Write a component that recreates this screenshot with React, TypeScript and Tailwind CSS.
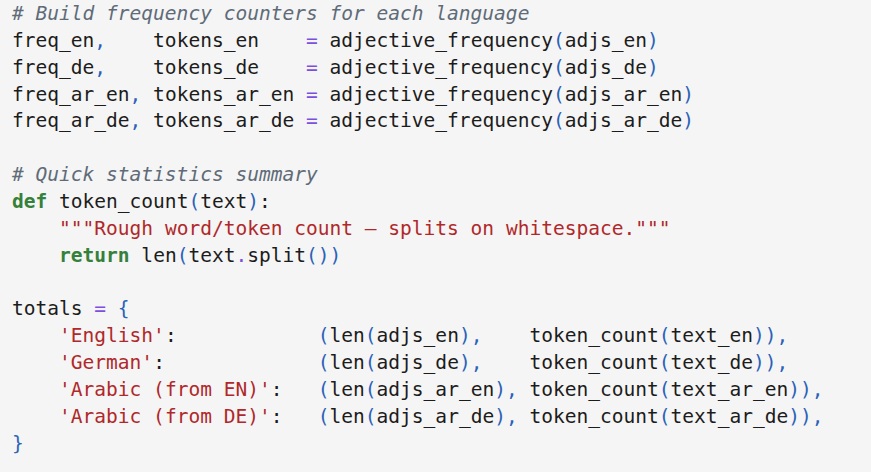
const C = ({ children }: { children: React.ReactNode }) => (
  <span className="italic text-[#5f6b78]">{children}</span>
);
const K = ({ children }: { children: React.ReactNode }) => (
  <span className="font-bold text-[#35803a]">{children}</span>
);
const S = ({ children }: { children: React.ReactNode }) => (
  <span className="text-[#b0282a]">{children}</span>
);
const O = ({ children }: { children: React.ReactNode }) => (
  <span className="text-[#7b4fe0]">{children}</span>
);
const P = ({ children }: { children: React.ReactNode }) => (
  <span className="text-[#2a62b8]">{children}</span>
);

const freqRows = [
  ['freq_en', '    tokens_en   ', 'adjs_en'],
  ['freq_de', '    tokens_de   ', 'adjs_de'],
  ['freq_ar_en', ' tokens_ar_en', 'adjs_ar_en'],
  ['freq_ar_de', ' tokens_ar_de', 'adjs_ar_de'],
];

const totals = [
  ["'English'", '            ', 'adjs_en', '    ', 'text_en'],
  ["'German'", '             ', 'adjs_de', '    ', 'text_de'],
  ["'Arabic (from EN)'", '   ', 'adjs_ar_en', ' ', 'text_ar_en'],
  ["'Arabic (from DE)'", '   ', 'adjs_ar_de', ' ', 'text_ar_de'],
];

export default function App() {
  return (
    <div className="h-[472px] w-[871px] overflow-hidden bg-[#f5f5f5]">
      <pre className="m-0 pl-[12px] pt-px font-['DejaVu_Sans_Mono',monospace] text-[19.55px] leading-[26.85px] text-[#1c1c1c]">
        <C># Build frequency counters for each language</C>
        {'\n'}
        {freqRows.map(([f, t, a]) => (
          <span key={f}>
            {f}
            <P>,</P>
            {t} <O>=</O> adjective_frequency<P>(</P>
            {a}
            <P>)</P>
            {'\n'}
          </span>
        ))}
        {'\n'}
        <C># Quick statistics summary</C>
        {'\n'}
        <K>def</K> token_count<P>(</P>text<P>)</P>:{'\n'}
        {'    '}
        <S>"""Rough word/token count — splits on whitespace."""</S>
        {'\n'}
        {'    '}
        <K>return</K> len<P>(</P>text<O>.</O>split<P>())</P>
        {'\n'}
        {'\n'}
        totals <O>=</O> <P>{'{'}</P>
        {'\n'}
        {totals.map(([k, sp, a, sp2, t]) => (
          <span key={k}>
            {'    '}
            <S>{k}</S>:{sp}
            <P>(</P>len<P>(</P>
            {a}
            <P>),</P>
            {sp2}token_count<P>(</P>
            {t}
            <P>)),</P>
            {'\n'}
          </span>
        ))}
        <P>{'}'}</P>
      </pre>
    </div>
  );
}
